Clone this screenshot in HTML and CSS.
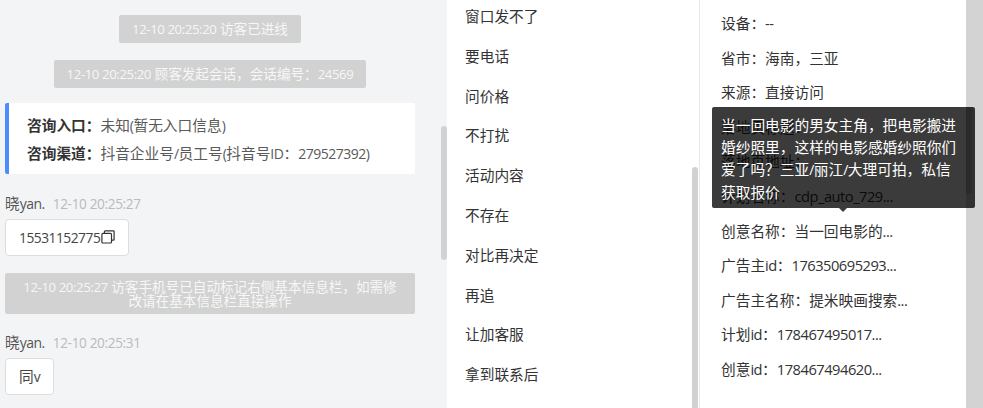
FILE: index.html
```html
<!DOCTYPE html>
<html lang="zh-CN">
<head>
<meta charset="UTF-8">
<meta name="viewport" content="width=device-width, initial-scale=1.0">
<title>会话详情</title>
<link rel="stylesheet" href="styles.css">
</head>
<body>

<div class="page">
    <div class="chat">
        <div class="notice-row"><div class="notice"><span class="en">12-10 20:25:20</span> 访客已进线</div></div>
        <div class="notice-row"><div class="notice"><span class="en">12-10 20:25:20</span> 顾客发起会话，会话编号：<span class="en">24569</span></div></div>
        <div class="entry-card">
            <div class="entry-line"><b>咨询入口：</b>未知<span class="en">(</span>暂无入口信息<span class="en">)</span></div>
            <div class="entry-line"><b>咨询渠道：</b>抖音企业号<span class="en">/</span>员工号<span class="en">(</span>抖音号<span class="en">ID</span>：<span class="en">279527392)</span></div>
        </div>
        <div class="sender">晓<span class="en">yan.</span><span class="sender-time">12-10 20:25:27</span></div>
        <div class="bubble"><span class="en">15531152775</span><svg class="copy-icon" width="14" height="14" viewBox="0 0 14 14" fill="none" stroke="#333" stroke-width="1.2"><rect x="0.9" y="3.4" width="9.6" height="9.6" rx="1"/><path d="M3.4 3.2V1.6q0-.7.7-.7h8.3q.7 0 .7.7v7.9q0 .7-.7.7h-1.8"/></svg></div>
        <div class="notice-wide"><span class="en">12-10 20:25:27</span> 访客手机号已自动标记右侧基本信息栏，如需修改请在基本信息栏直接操作</div>
        <div class="sender second">晓<span class="en">yan.</span><span class="sender-time">12-10 20:25:31</span></div>
        <div class="bubble short">同<span class="en">v</span></div>
        <div class="thumb thumb-chat"></div>
    </div>

    <div class="tags">
        <ul class="tag-list">
            <li>窗口发不了</li>
            <li>要电话</li>
            <li>问价格</li>
            <li>不打扰</li>
            <li>活动内容</li>
            <li>不存在</li>
            <li>对比再决定</li>
            <li>再追</li>
            <li>让加客服</li>
            <li>拿到联系后</li>
        </ul>
        <div class="thumb thumb-tags"></div>
    </div>

    <ul class="info">
        <li>设备：<span class="en">--</span></li>
        <li>省市：海南，三亚</li>
        <li>来源：直接访问</li>
        <li>落地页标题：</li>
        <li>落地页地址：</li>
        <li>计划名称：<span class="en">cdp_auto_729...</span></li>
        <li>创意名称：当一回电影的<span class="en">...</span></li>
        <li>广告主<span class="en">id</span>：<span class="en">176350695293...</span></li>
        <li>广告主名称：提米映画搜索<span class="en">...</span></li>
        <li>计划<span class="en">id</span>：<span class="en">178467495017...</span></li>
        <li>创意<span class="en">id</span>：<span class="en">178467494620...</span></li>
    </ul>

    <div class="page-scroll"></div>

    <div class="tooltip">
        当一回电影的男女主角，把电影搬进婚纱照里，这样的电影感婚纱照你们爱了吗？三亚<span class="en">/</span>丽江<span class="en">/</span>大理可拍，私信获取报价
        <span class="tooltip-shade"></span>
    </div>
</div>

</body>
</html>
```

FILE: styles.css
```css
* {
    box-sizing: border-box;
}
body {
    margin: 0;
    font-family: "Open Sans", "Noto Sans CJK SC", sans-serif;
    font-size: 14.7px;
    color: #333;
    background-color: #fff;
}
.page {
    position: relative;
    display: flex;
    height: 408px;
    overflow: hidden;
}
.en {
    font-size: 14px;
    letter-spacing: -0.5px;
}
.thumb {
    position: absolute;
    width: 6px;
    border-radius: 3px;
    background-color: #d2d2d2;
}

/* left column */
.chat {
    position: relative;
    flex: 0 0 447px;
    padding: 15px 32px 0 5px;
    background-color: #f3f4f6;
}
.notice-row {
    display: flex;
    justify-content: center;
    margin-bottom: 17px;
}
.notice {
    height: 28px;
    padding: 0 13px;
    font-size: 13.6px;
    line-height: 28px;
    border-radius: 2px;
    color: #f7f7f7;
    background-color: #d1d2d1;
}
.notice .en,
.notice-wide .en {
    font-size: 13.2px;
    letter-spacing: -0.4px;
}
.entry-card {
    height: 71px;
    margin-top: -2px;
    padding: 8px 0 0 18px;
    border-left: 4px solid #4b8dff;
    border-radius: 2px;
    background-color: #fff;
    color: #5a5a5a;
}
.entry-line {
    height: 28px;
    line-height: 28px;
}
.entry-line b {
    color: #333;
}
.sender {
    margin-top: 19px;
    height: 20px;
    line-height: 20px;
    color: #555;
}
.sender.second {
    margin-top: 18px;
}
.sender-time {
    margin-left: 8px;
    font-size: 13.6px;
    letter-spacing: -0.35px;
    color: #bbb;
}
.bubble {
    display: table;
    height: 37px;
    margin-top: 6px;
    padding: 0 13px;
    line-height: 35px;
    border: 1px solid #ddd;
    border-radius: 4px;
    background-color: #fff;
    color: #444;
}
.bubble .en {
    font-size: 13.8px;
}
.bubble.short {
    height: 36px;
    line-height: 34px;
}
.copy-icon {
    vertical-align: -1px;
    margin-left: 1px;
}
.notice-wide {
    height: 41px;
    margin-top: 17px;
    padding: 7px 16px 0;
    font-size: 13.6px;
    line-height: 14px;
    text-align: center;
    border-radius: 2px;
    color: #f7f7f7;
    background-color: #d1d2d1;
}
.thumb-chat {
    top: 126px;
    right: 0;
    height: 134px;
}

/* middle column */
.tags {
    position: relative;
    flex: 0 0 252px;
    padding-left: 18px;
    background-color: #fff;
}
.tag-list {
    margin: 0;
    padding: 0;
    list-style: none;
}
.tag-list li {
    height: 39.8px;
    line-height: 32px;
}
.thumb-tags {
    top: 167px;
    right: 1px;
    height: 260px;
}

/* right column */
.info {
    flex: 0 0 267px;
    margin: 0;
    padding: 6px 0 0 21px;
    list-style: none;
    border-left: 1px solid #e8e8e8;
    background-color: #fff;
}
.info li {
    height: 34.6px;
    line-height: 34px;
}
.info .en {
    font-size: 14.7px;
}
.page-scroll {
    flex: 1;
    background-color: #d3d3d3;
}

/* popup over the right column */
.tooltip {
    position: absolute;
    top: 107px;
    left: 712px;
    width: 263px;
    height: 101px;
    padding: 7px 14px 0 9px;
    line-height: 22px;
    border-radius: 2px;
    color: #fff;
    background-color: rgba(0, 0, 0, 0.77);
}
.tooltip::after {
    content: "";
    position: absolute;
    left: 127px;
    bottom: -4px;
    border-top: 4px solid #3c3c3c;
    border-left: 4px solid transparent;
    border-right: 4px solid transparent;
}
.tooltip-shade {
    position: absolute;
    top: 0;
    left: 254px;
    width: 6px;
    height: 87px;
    border-radius: 0 0 3px 3px;
    background-color: rgba(0, 0, 0, 0.14);
}
```
